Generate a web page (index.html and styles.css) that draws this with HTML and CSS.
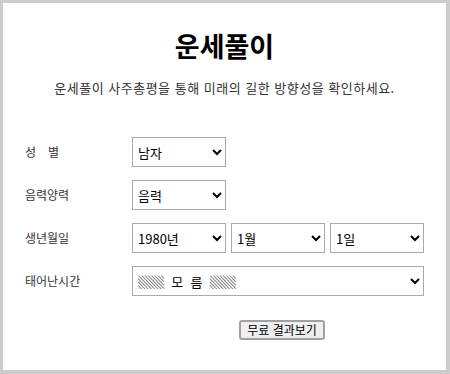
FILE: index.html
```html
<!DOCTYPE html>
<html lang="ko">
<head>
    <meta charset="UTF-8">
    <meta name="viewport" content="width=device-width, initial-scale=1.0">
    <title>운세풀이</title>
    <link rel="stylesheet" href="styles.css">
</head>
<body>
    <div class="box">
        <h1>운세풀이</h1>
        <p class="intro">운세풀이 사주총평을 통해 미래의 길한 방향성을 확인하세요.</p>

        <form class="form">
            <label class="label">성&emsp;별</label>
            <div class="field">
                <select class="sel">
                    <option>남자</option>
                    <option>여자</option>
                </select>
            </div>

            <label class="label">음력양력</label>
            <div class="field">
                <select class="sel">
                    <option>음력</option>
                    <option>양력</option>
                </select>
            </div>

            <label class="label">생년월일</label>
            <div class="field">
                <select class="sel">
                    <option>1980년</option>
                </select>
                <select class="sel">
                    <option>1월</option>
                </select>
                <select class="sel">
                    <option>1일</option>
                </select>
            </div>

            <label class="label">태어난시간</label>
            <div class="field">
                <select class="sel wide">
                    <option>▒▒&nbsp;&nbsp;모&nbsp;&nbsp;름&nbsp;&nbsp;▒▒</option>
                </select>
            </div>

            <div class="submit">
                <button type="button" class="btn">무료 결과보기</button>
            </div>
        </form>
    </div>
</body>
</html>
```

FILE: styles.css
```css
html, body {
    margin: 0;
    padding: 0;
}
body {
    font-family: "Noto Sans CJK KR", "Noto Sans", sans-serif;
    color: #333;
    background-color: #fff;
}
.box {
    box-sizing: border-box;
    width: 450px;
    height: 374px;
    border: 3px solid #ccc;
    border-right-width: 4px;
    border-bottom-width: 4px;
}
h1 {
    margin: 0;
    padding-top: 26px;
    font-size: 27px;
    line-height: 34px;
    text-align: center;
    color: #000;
}
.intro {
    margin: 16px 0 0;
    font-size: 13px;
    line-height: 18px;
    letter-spacing: 0.5px;
    text-align: center;
    color: #333;
}
.form {
    display: grid;
    grid-template-columns: 107px auto;
    row-gap: 13px;
    margin-top: 40px;
    padding-left: 22px;
}
.label {
    font-size: 12px;
    line-height: 30px;
    color: #333;
}
.field {
    display: flex;
    gap: 5px;
}
.sel {
    box-sizing: border-box;
    width: 94px;
    height: 30px;
    margin: 0;
    padding: 0 1px;
    border: 1px solid #aaa;
    border-radius: 0;
    background-color: #fff;
    font-family: "Noto Sans CJK KR", sans-serif;
    font-size: 13px;
    color: #000;
}
.sel.wide {
    width: 292px;
}
.submit {
    grid-column: 2;
    padding-left: 107px;
    margin-top: 7px;
}
.btn {
    box-sizing: border-box;
    width: 86px;
    height: 20px;
    padding: 0;
    border: 2px solid #a0a0a0;
    border-radius: 3px;
    background-color: #efefef;
    font-family: "Noto Sans CJK KR", sans-serif;
    font-size: 12px;
    line-height: 14px;
    color: #000;
}
```
